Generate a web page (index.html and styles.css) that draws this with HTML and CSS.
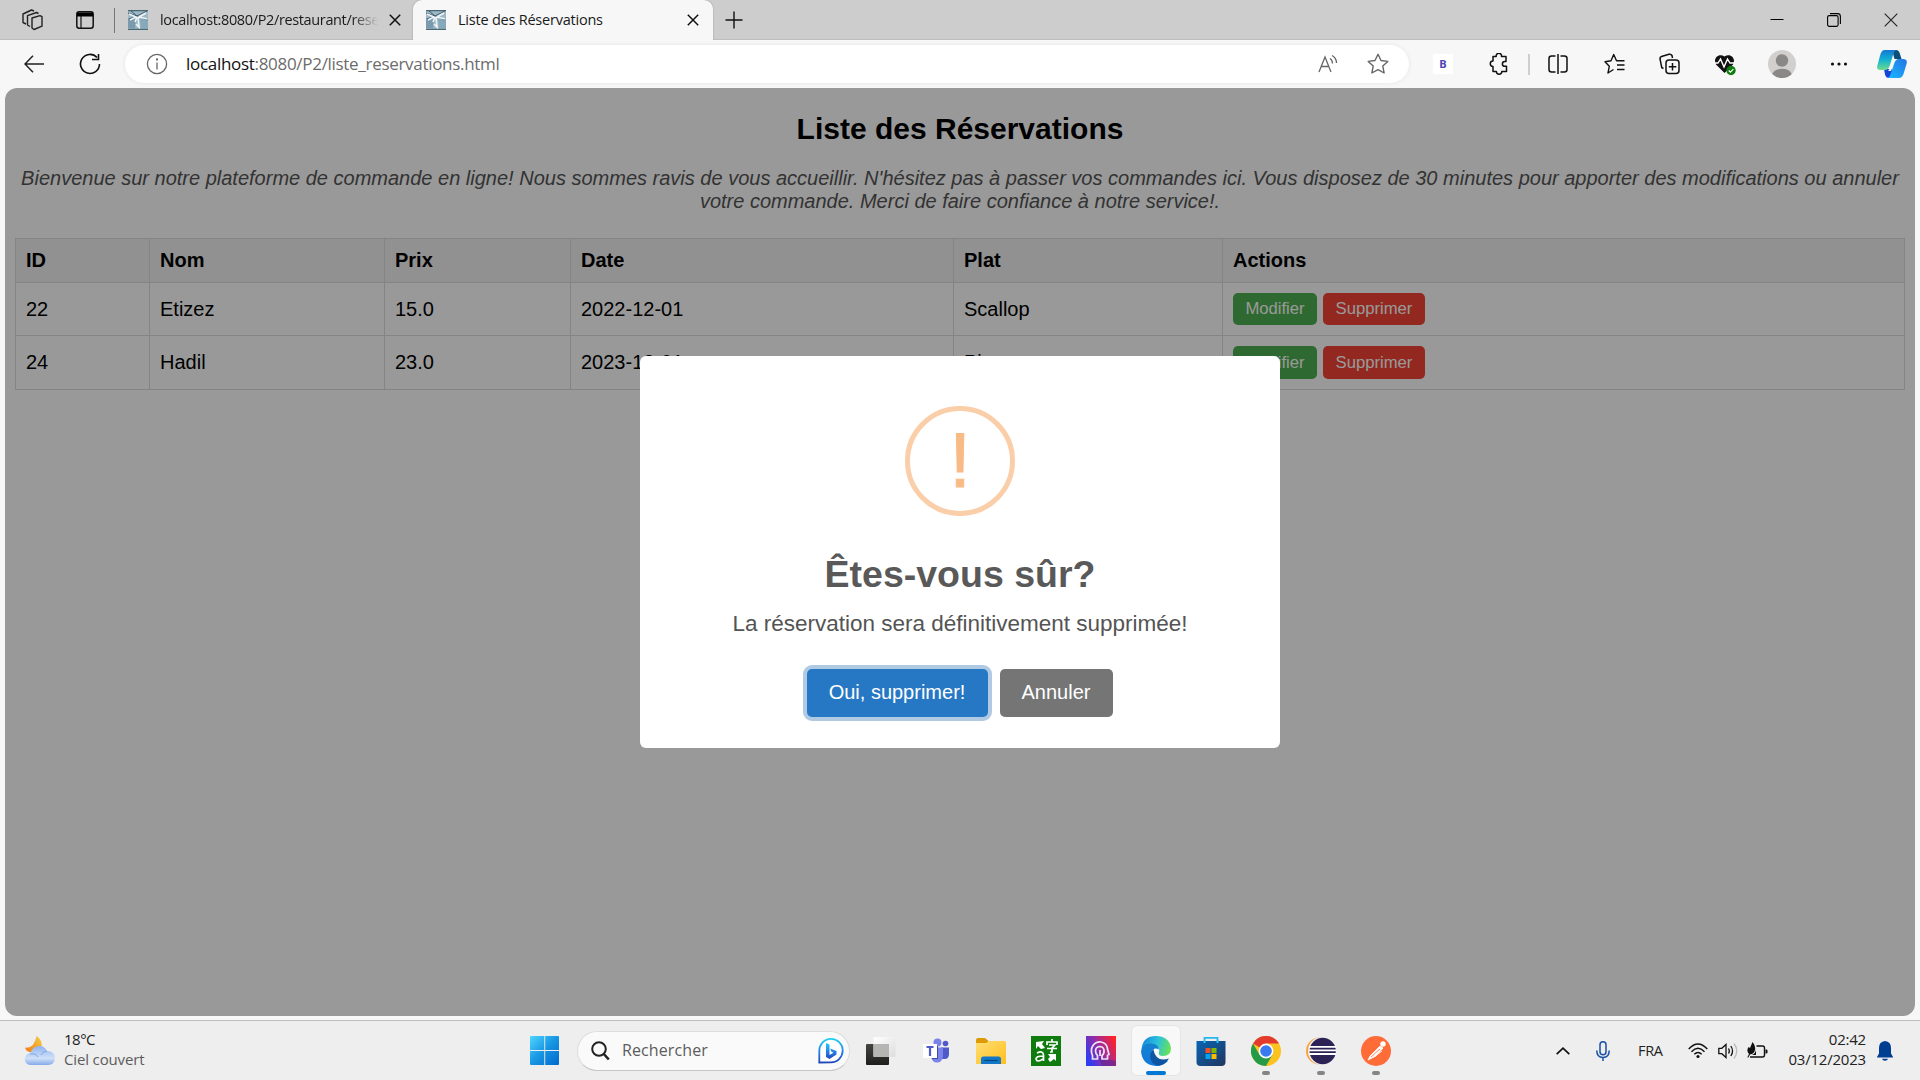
FILE: index.html
```html
<!DOCTYPE html>
<html lang="fr">
<head>
<meta charset="utf-8">
<title>Liste des Réservations</title>
<link rel="stylesheet" href="styles.css">
</head>
<body>
<svg class="defs" width="0" height="0" aria-hidden="true">
  <symbol id="favicon" viewBox="0 0 20 20">
    <rect width="20" height="20" rx="2" fill="#9db8c6"/>
    <path d="M0 8h8L7 18H0z" fill="#7a9bad"/><path d="M12 9h8v9h-7z" fill="#86aabc"/>
    <path d="M0 0h20v1.200H0zM0 18.800h20V20H0z" fill="#4b6775"/>
    <path d="M0 3l9 3 10-5M1 9l8-3 10 4M3 1l6 5" stroke="#3f5b69" stroke-width="1" fill="none"/>
    <path d="M1 4l7 3-6 3M18 3l-7 4 8 2M9 7l-2 5M10 7l1 10-3-3" stroke="#eef4f7" stroke-width="1.600" fill="none"/>
  </symbol>
  <symbol id="cross" viewBox="0 0 12 12"><path d="M.8.8l10.400 10.400M11.200.8L.8 11.200" stroke="#111" stroke-width="1.500" fill="none"/></symbol>
</svg>

<header class="tabbar">
  <svg class="workspaces" width="22" height="22" viewBox="0 0 22 22" fill="none" stroke="#222" stroke-width="1.400" stroke-linejoin="round"><path d="M10 9l8-2.300 2 1v9.500l-8 3.300-2-1.500z"/><path d="M8 17.500L5.500 16V6.700L14.500 3.500l2 1M4 15l-3-1.500V5L9.500 1l2.500 1"/></svg>
  <svg class="tab-actions" width="18" height="18" viewBox="0 0 18 18"><rect x=".8" y=".8" width="16.400" height="16.400" rx="2.500" fill="none" stroke="#111" stroke-width="1.500"/><path d="M1 1.500h16V5.500H1z"/><path d="M5 5v12" stroke="#111" stroke-width="1.200"/></svg>
  <span class="tab-rule"></span>
  <div class="tab">
    <svg width="20" height="20"><use href="#favicon"/></svg>
    <span class="tab-title tab-title-faded">localhost:8080/P2/restaurant/rese</span>
    <svg class="tab-close" width="12" height="12"><use href="#cross"/></svg>
  </div>
  <div class="tab tab-active">
    <svg width="20" height="20"><use href="#favicon"/></svg>
    <span class="tab-title">Liste des Réservations</span>
    <svg class="tab-close" width="12" height="12"><use href="#cross"/></svg>
  </div>
  <svg class="new-tab" width="18" height="18" viewBox="0 0 18 18"><path d="M9 .5v17M.5 9h17" stroke="#111" stroke-width="1.400"/></svg>
  <div class="window-controls">
    <svg width="14" height="14" viewBox="0 0 14 14"><path d="M.5 6.500h13" stroke="#000" stroke-width="1"/></svg>
    <svg width="14" height="14" viewBox="0 0 14 14" fill="none" stroke="#000" stroke-width="1.100"><rect x=".6" y="2.600" width="10.500" height="10.800" rx="1.600"/><path d="M3 .6h7.500q2.900 0 2.900 2.900V11"/></svg>
    <svg width="14" height="14" viewBox="0 0 14 14"><path d="M.7.7l12.600 12.600M13.300.7L.7 13.300" stroke="#222" stroke-width="1.100"/></svg>
  </div>
</header>

<nav class="toolbar">
  <svg class="back" width="20" height="18" viewBox="0 0 20 18" fill="none" stroke="#222" stroke-width="1.500"><path d="M9 .7L1 9l8 8.300M1 9h19"/></svg>
  <svg class="reload" width="22" height="22" viewBox="0 0 22 22" fill="none" stroke="#111" stroke-width="1.600"><path d="M20.500 11A9.500 9.500 0 1 1 18 4.500M19.500 1v5.500H13"/></svg>
  <div class="address">
    <svg width="22" height="22" viewBox="0 0 22 22" fill="none" stroke="#666" stroke-width="1.300"><circle cx="11" cy="11" r="9.600"/><path d="M11 9.500v7"/><circle cx="11" cy="6.500" r=".5" fill="#666"/></svg>
    <span class="url"><span class="url-host">localhost</span>:8080/P2/liste_reservations.html</span>
    <svg class="read-aloud" width="21" height="20" viewBox="0 0 21 20" fill="none" stroke="#666" stroke-width="1.300"><path d="M1 18L7 3l6 15M3.200 12.500h7.600M12 4.500q2.500 1.500 2.500 5M14 1.500q4.500 2.500 4.500 7.500"/></svg>
    <svg width="22" height="22" viewBox="0 0 22 22" fill="none" stroke="#666" stroke-width="1.400" stroke-linejoin="round"><path d="M11 1.300l3 6.200 6.800.9-5 4.700 1.300 6.900-6.100-3.300L4.900 20l1.300-6.900-5-4.700L8 7.500z"/></svg>
  </div>
  <span class="slot"><span class="extension">B</span></span>
  <span class="slot"><svg width="20" height="22" viewBox="0 0 20 22" fill="none" stroke="#111" stroke-width="1.500" stroke-linejoin="round"><path d="M4 3.500h3.200a2.700 2.700 0 1 1 5.300 0h4.500v5h-1.200a2.200 2.200 0 0 0 0 4.800h1.700v5.200h-4.700a2.700 2.700 0 1 1-5.400 0H4v-5a2.700 2.700 0 1 1 0-5.400z"/></svg></span>
  <span class="toolbar-rule"></span>
  <span class="slot"><svg width="20" height="22" viewBox="0 0 20 22" fill="none" stroke="#111" stroke-width="1.500"><path d="M7.500 3H3.500Q1 3 1 5.500v11Q1 19 3.500 19h4M12.500 3h4Q19 3 19 5.500v11q0 2.500-2.500 2.500h-4M10 1v20"/></svg></span>
  <span class="slot"><svg width="21" height="22" viewBox="0 0 21 22" fill="none" stroke="#111" stroke-width="1.400" stroke-linejoin="round"><path d="M9.500 16.500L4 20l1.300-6.700L1 8.700l6-1L9.700 1.500l2.800 6.200h8M13 12h7.500M13 16.500h7.500"/></svg></span>
  <span class="slot slot-narrow"><svg width="21" height="22" viewBox="0 0 21 22" fill="none" stroke="#111" stroke-width="1.500"><path d="M4.500 15.500L2.800 14.700 1 6Q.8 4 2.500 3.500L10 1.300q2-.5 3 1.200L13.500 5"/><rect x="7" y="7" width="13" height="13.500" rx="3"/><path d="M13.500 10v7.500M9.800 13.700h7.500"/></svg></span>
  <span class="slot slot-narrow"><svg width="22" height="24" viewBox="0 0 22 24"><path d="M10.500 21L2 12.500C-1.500 6 5 .5 10.500 4.500 16 .5 22.500 6 19 12.500z" fill="#111"/><path d="M0 11h4l2.500-4 3.500 8 3.500-8 2.500 4h5" fill="none" stroke="#fff" stroke-width="1.400"/><circle cx="17" cy="18.500" r="4.700" fill="#107c10"/><path d="M14.800 18.500l1.600 1.600 3-3" fill="none" stroke="#fff" stroke-width="1.100"/></svg></span>
  <span class="slot slot-wide"><svg width="28" height="28" viewBox="0 0 28 28"><circle cx="14" cy="14" r="14" fill="#d2d0ce"/><circle cx="14" cy="10.500" r="6.200" fill="#8a8886"/><path d="M4.200 24a10.500 8 0 0 1 19.600 0A14 14 0 0 1 4.200 24z" fill="#8a8886"/></svg></span>
  <span class="slot"><svg width="18" height="6" viewBox="0 0 18 6" fill="#111"><circle cx="2.500" cy="3" r="1.600"/><circle cx="9" cy="3" r="1.600"/><circle cx="15.500" cy="3" r="1.600"/></svg></span>
  <span class="slot slot-copilot"><svg width="30" height="28" viewBox="0 0 30 28">
    <defs><linearGradient id="cp1" x1="0" y1="0" x2="0" y2="1"><stop offset="0" stop-color="#1577d3"/><stop offset=".5" stop-color="#12b3d0"/><stop offset="1" stop-color="#6fdc8c"/></linearGradient><linearGradient id="cp2" x1="0" y1="1" x2="1" y2="0"><stop offset="0" stop-color="#18b9ff"/><stop offset="1" stop-color="#2474e4"/></linearGradient></defs>
    <path d="M15 0h4q3 0 4 4l1.500 5h-7z" fill="#0b4f7d"/><path d="M15 28h-3q-3 0-4-3.500L7 19h8z" fill="#1744d8"/>
    <path d="M7.500 0H19q-2 1-3 5l-3 10q-1.500 5-5 5H3q-4 0-2.500-5L3.500 4Q5 0 7.500 0z" fill="url(#cp1)"/>
    <path d="M22 28H11q2-1 3-5l3-9q1.500-5 5-5h4q5 0 3.500 5l-3 10q-1.500 4-4.500 4z" fill="url(#cp2)"/><path d="M16 9h3q-2 2-3 6l-2 6h-3q1.500-1 2.500-5z" fill="#f7f7f7"/></svg></span>
</nav>

<div class="viewport">
  <main class="page">
    <h2 class="page-title">Liste des Réservations</h2>
    <p class="intro">Bienvenue sur notre plateforme de commande en ligne! Nous sommes ravis de vous accueillir. N'hésitez pas à passer vos commandes ici. Vous disposez de 30 minutes pour apporter des modifications ou annuler votre commande. Merci de faire confiance à notre service!.</p>
    <table class="bookings">
      <colgroup><col class="col-id"><col class="col-name"><col class="col-price"><col class="col-date"><col class="col-dish"><col></colgroup>
      <thead><tr><th>ID</th><th>Nom</th><th>Prix</th><th>Date</th><th>Plat</th><th>Actions</th></tr></thead>
      <tbody>
        <tr><td>22</td><td>Etizez</td><td>15.0</td><td>2022-12-01</td><td>Scallop</td><td><div class="actions"><button class="btn btn-edit">Modifier</button><button class="btn btn-delete">Supprimer</button></div></td></tr>
        <tr class="row-last"><td>24</td><td>Hadil</td><td>23.0</td><td>2023-12-01</td><td>Pizza</td><td><div class="actions"><button class="btn btn-edit">Modifier</button><button class="btn btn-delete">Supprimer</button></div></td></tr>
      </tbody>
    </table>
  </main>
  <div class="overlay">
    <section class="modal" role="dialog">
      <div class="modal-icon">!</div>
      <h2 class="modal-title">Êtes-vous sûr?</h2>
      <div class="modal-text">La réservation sera définitivement supprimée!</div>
      <div class="modal-actions"><button class="modal-btn confirm">Oui, supprimer!</button><button class="modal-btn cancel">Annuler</button></div>
    </section>
  </div>
</div>

<footer class="taskbar">
  <div class="weather">
    <svg width="32" height="30" viewBox="0 0 32 30">
      <defs><linearGradient id="moon" x1="1" y1="0" x2="0" y2="1"><stop offset="0" stop-color="#f6cf45"/><stop offset="1" stop-color="#ef7a18"/></linearGradient><linearGradient id="cloud" x1="0" y1="0" x2="0" y2="1"><stop offset="0" stop-color="#8fb4f0"/><stop offset=".65" stop-color="#cfe0f8"/><stop offset="1" stop-color="#86a9ea"/></linearGradient></defs>
      <path d="M12.500 0Q19 4 17.500 12L8 16.500Q2 16 1 11.500 10 13 12.500 0z" fill="url(#moon)"/>
      <path d="M7 29a6 6 0 0 1-.5-12Q9 10 15.500 10q5 0 7.500 5 8 0 8 7.500-.5 6-7 6.500z" fill="url(#cloud)"/><path d="M6 18q6-1 8 3M23 15q-4 0-6 4" fill="none" stroke="#7fa3e3" stroke-width="1"/></svg>
    <div class="weather-text"><span class="weather-temp">18°C</span><span class="weather-sky">Ciel couvert</span></div>
  </div>
  <svg class="start" width="30" height="30" viewBox="0 0 30 30"><defs><linearGradient id="win" x1="0" y1="0" x2="1" y2="1"><stop offset="0" stop-color="#4fd5ff"/><stop offset=".5" stop-color="#1795e3"/><stop offset="1" stop-color="#0069cc"/></linearGradient></defs><path d="M1 0h13.300v14H0V1q0-1 1-1zM15.200 0H28q1 0 1 1v13H15.200zM0 15h14.300v14H1q-1 0-1-1zM15.200 15H29v13q0 1-1 1H15.200z" fill="url(#win)"/></svg>
  <div class="search">
    <svg width="19" height="20" viewBox="0 0 19 20" fill="none" stroke="#222" stroke-width="2"><circle cx="8" cy="8" r="6.800"/><path d="M12.800 13l5 5.500" stroke-width="2.600"/></svg>
    <span class="search-label">Rechercher</span>
    <svg width="26" height="26" viewBox="0 0 26 26"><defs><linearGradient id="bing" x1="0" y1="0" x2="0" y2="1"><stop offset="0" stop-color="#20d0f2"/><stop offset=".6" stop-color="#2577e8"/><stop offset="1" stop-color="#2048b8"/></linearGradient></defs><path d="M1.300 24.500V13A11.700 11.700 0 1 1 13 24.300z" fill="#fff" stroke="url(#bing)" stroke-width="1.800"/><path d="M8 5l3.500 1.500v10.500l4-2.300-2.300-1.200-1-3 6.300 2.500v3.500L11.500 21 8 19z" fill="url(#bing)"/></svg>
  </div>
  <div class="apps">
    <span class="app"><svg width="30" height="30" viewBox="0 0 30 30"><defs><linearGradient id="tv" x1="0" y1="0" x2="0" y2="1"><stop offset="0" stop-color="#444442"/><stop offset="1" stop-color="#1e1e1c"/></linearGradient><linearGradient id="tv2" x1="0" y1="0" x2="1" y2="1"><stop offset="0" stop-color="#fff"/><stop offset="1" stop-color="#ddd"/></linearGradient></defs><rect y="8" width="23" height="21" rx="1" fill="url(#tv)"/><rect x="7.500" y="1" width="22" height="20" rx="1" fill="url(#tv2)"/><path d="M7.500 8H23v13H7.500z" fill="#b5b5b4"/></svg></span>
    <span class="app"><svg width="28" height="26" viewBox="0 0 28 26"><circle cx="15.500" cy="4.500" r="4" fill="#7b83eb"/><circle cx="23.500" cy="5.500" r="2.800" fill="#5059c9"/><path d="M19 9.500h8v7q-.5 5-5 4.500h-3z" fill="#5059c9"/><path d="M10 9.500h11v9q-1 6-6 6t-6-6z" fill="#7b83eb"/><path d="M10 8h6v13h-6z" fill="#444a9e"/><rect x="1" y="6" width="14" height="14" fill="#fff"/><path d="M4.500 9h7M8 9v9" stroke="#5059c9" stroke-width="2.200"/></svg></span>
    <span class="app"><svg width="30" height="28" viewBox="0 0 30 28"><defs><linearGradient id="fold" x1="0" y1="0" x2="1" y2="1"><stop offset="0" stop-color="#ffdf75"/><stop offset="1" stop-color="#ffbe1c"/></linearGradient></defs><path d="M0 8V3q0-2 2-2h7l3.500 3v4z" fill="#dc9a05"/><path d="M0 6h10l3-2h15q2 0 2 2v21H0z" fill="url(#fold)"/><path d="M5 27v-5q0-2.500 2.500-2.500h15q2.500 0 2.500 2.500v5z" fill="#1177c9"/><path d="M8.500 23.500h13" stroke="#07477f" stroke-width="1.200"/></svg></span>
    <span class="app"><svg width="30" height="30" viewBox="0 0 30 30"><rect width="30" height="30" fill="#107c10"/><path d="M5 6l8-1-2 3 3 4-4 1-3-3-2 3zM17 18h8v7l-2-2-4 3-2-3 2-2z" fill="#fff"/><path d="M6 17q6-3 6.500 2v6M12 20q-7 0-7 3 1 4 7 0M21 3v3M16 9V6h10v3M18 9h6l-3 3v4h-2M16 12.500h10" fill="none" stroke="#fff" stroke-width="1.700"/></svg></span>
    <span class="app"><svg width="30" height="30" viewBox="0 0 30 30"><defs><linearGradient id="pr" x1="0" y1=".7" x2="1" y2=".2"><stop offset="0" stop-color="#2c3cf5"/><stop offset=".5" stop-color="#9b2ba0"/><stop offset="1" stop-color="#ff2228"/></linearGradient></defs><rect width="30" height="30" fill="url(#pr)"/><path d="M13 22l9 1 8 2v5H16z" fill="#5b288e" opacity=".6"/><path d="M11.500 23H6.500v-3.500Q4 14 7 9.500q3-4 8-3.500 6 1 6.500 7l1.500 5.500-1.500.5v4H16v-3.500q2.500-2 2-5.500-.8-3.500-4.500-3.500-4 .5-4 4.500 0 2.500 2 4.500zM14 20v-6" fill="none" stroke="#eee4f5" stroke-width="1.700"/></svg></span>
    <span class="app app-active"><svg width="30" height="30" viewBox="0 0 30 30"><defs><linearGradient id="e1" x1="0" y1=".4" x2="1" y2=".6"><stop offset="0" stop-color="#1688d9"/><stop offset=".5" stop-color="#2bc1dc"/><stop offset="1" stop-color="#6ce450"/></linearGradient><linearGradient id="e2" x1="0" y1="0" x2="0" y2="1"><stop offset="0" stop-color="#1482cf"/><stop offset="1" stop-color="#1479dc"/></linearGradient></defs><path d="M.5 13Q2 0 15 0t15 12q0 8-8 8-5 0-4-3 2-6-6-8Q5 8 .5 13z" fill="url(#e1)"/><path d="M0 15Q2 7 10 7.500q7 0 8 6-6-3-6 3 1 7 9 8l6 .5Q22 30 15 30 1 29 0 15z" fill="url(#e2)"/><path d="M12.500 14Q8 17 9.500 23q2 6 8 6.800Q24 29 28 22.500q-13 4-15.500-8.500z" fill="#1055a2"/></svg><i class="indicator indicator-wide"></i></span>
    <span class="app"><svg width="30" height="30" viewBox="0 0 30 30"><defs><linearGradient id="st" x1="0" y1="0" x2="1" y2="1"><stop offset="0" stop-color="#0865b5"/><stop offset="1" stop-color="#20365f"/></linearGradient></defs><path d="M8.500 7V1.800h13V7" fill="none" stroke="#25b7ee" stroke-width="1.800"/><path d="M.5 5h29v21q0 4-4 4h-21q-4 0-4-4z" fill="url(#st)"/><path d="M8.500 7V4.500M21.500 7V4.500" stroke="#35c9fa" stroke-width="1.800"/><path d="M9.500 12h5v5h-5z" fill="#f25022"/><path d="M15.500 12h5v5h-5z" fill="#7fba00"/><path d="M9.500 18h5v5h-5z" fill="#00a4ef"/><path d="M15.500 18h5v5h-5z" fill="#ffb900"/></svg></span>
    <span class="app"><svg width="30" height="30" viewBox="0 0 30 30"><circle cx="15" cy="15" r="15" fill="#fcc31e"/><path d="M15 15L2 7.500A15 15 0 0 1 28 7.500H15z" fill="#e33b2e"/><path d="M2 7.500A15 15 0 0 0 15 30l6.500-11.300L15 15l-6.500 3.700z" fill="#259b48"/><circle cx="15" cy="15" r="7.400" fill="#fff"/><circle cx="15" cy="15" r="5.800" fill="#397bee"/></svg><i class="indicator"></i></span>
    <span class="app"><svg width="30" height="30" viewBox="0 0 30 30"><circle cx="13.500" cy="15" r="13.500" fill="#f9a23c"/><circle cx="16" cy="15" r="14" fill="#eee"/><circle cx="16.700" cy="15" r="13.200" fill="#2c2255"/><path d="M3 10.800h27M3 14.400h27M3 18h27" stroke="#fff" stroke-width="1.800"/></svg><i class="indicator"></i></span>
    <span class="app"><svg width="30" height="30" viewBox="0 0 30 30"><circle cx="15" cy="15" r="15" fill="#ff6c37"/><circle cx="22" cy="8" r="2.700" fill="#fff"/><path d="M19 10l3 2-7 8-8 4 2-4zM17 18l4-3" fill="#fff" stroke="#fff" stroke-width=".8"/><path d="M10 21l9-8" stroke="#ff6c37" stroke-width=".8"/></svg><i class="indicator"></i></span>
  </div>
  <div class="tray">
    <svg class="chevron" width="14" height="8" viewBox="0 0 14 8" fill="none" stroke="#111" stroke-width="1.700"><path d="M.7 7.200L7 1.200l6.300 6"/></svg>
    <svg class="mic" width="14" height="20" viewBox="0 0 14 20" fill="none" stroke="#1a50a5" stroke-width="1.500"><rect x="4" y=".8" width="6" height="13" rx="3"/><path d="M.8 9.500q0 7 6.200 7t6.200-7M7 16.500V20"/></svg>
    <span class="lang">FRA</span>
    <svg class="wifi" width="20" height="16" viewBox="0 0 20 16" fill="none" stroke="#111" stroke-width="1.400"><path d="M.7 6Q10-4 19.300 6M3.500 8.700Q10 1.800 16.500 8.700M6.300 11.300q3.700-3.700 7.400 0"/><circle cx="10" cy="13.500" r="1.600" fill="#111" stroke="none"/></svg>
    <svg class="sound" width="20" height="18" viewBox="0 0 20 18" fill="none" stroke="#111" stroke-width="1.300"><path d="M.8 6.300h3L8 2.500v13l-4.200-3.800h-3z"/><path d="M10.500 6.500q1.700 2.500 0 5M12.800 4q3.500 5 0 10"/><path d="M16 1.500q5.500 7.500 0 15" stroke="#bbb"/></svg>
    <svg class="battery" width="21" height="17" viewBox="0 0 21 17"><path d="M9.500 4h6q2 0 2 2v7q0 2-2 2H3" fill="none" stroke="#111" stroke-width="1.400"/><path d="M18.500 7.500h1q1 0 1 1v2q0 1-1 1h-1zM5.500 0Q9 4 8 8q-1 4-5 4.500L1 16l-.5-1 1.500-3Q-1 9 1.500 5L3 6zM9 8v5H5q3-1 4-5z" fill="#111"/></svg>
    <div class="clock"><span>02:42</span><span>03/12/2023</span></div>
    <svg class="bell" width="16" height="20" viewBox="0 0 16 20" fill="#003e92"><path d="M8 0Q2 .5 2 7v5.500L0 16v.5h16V16l-2-3.500V7Q14 .5 8 0zM5 17.800h6q-.5 2-3 2t-3-2z"/></svg>
  </div>
</footer>
</body>
</html>
```
FILE: styles.css
```css
* { box-sizing: border-box; }
body {
  margin: 0;
  width: 1920px;
  height: 1080px;
  overflow: hidden;
  display: flex;
  flex-direction: column;
  background: #f7f7f7;
  font-family: "Liberation Sans", Arial, sans-serif;
}
svg { display: block; flex: none; }
.defs { display: none; }

/* Tab strip */
.tabbar {
  height: 40px;
  flex: none;
  display: flex;
  align-items: center;
  background: #cdcdcd;
  box-shadow: inset 0 -1px 0 #bdbdbd;
  font-family: "Open Sans", "Noto Sans", sans-serif;
}
.workspaces { margin-left: 22px; }
.tab-actions { margin-left: 32px; }
.tab-rule { width: 1px; height: 25px; margin-left: 20px; background: #777; }
.tab {
  height: 40px;
  width: 298px;
  display: flex;
  align-items: center;
  padding: 0 13px;
}
.tab-active {
  width: 300px;
  padding-right: 14px;
  background: #f7f7f7;
  border-radius: 9px 9px 0 0;
  box-shadow: 0 0 2px #999;
  clip-path: inset(0 -3px 0 -3px);
}
.tab-title { margin-left: 12px; padding-bottom: 2px; flex: 1; font-size: 14.5px; letter-spacing: -0.22px; color: #1a1a1a; white-space: nowrap; }
.tab-title-faded { flex: none; width: 218px; letter-spacing: -0.36px; overflow: hidden; -webkit-mask-image: linear-gradient(90deg, #000 88%, transparent); mask-image: linear-gradient(90deg, #000 88%, transparent); }
.tab-title-faded + .tab-close { margin-left: 11px; }
.new-tab { margin-left: 12px; }
.window-controls { margin-left: auto; margin-right: 22px; display: flex; gap: 43px; }

/* Toolbar */
.toolbar { height: 48px; flex: none; display: flex; align-items: center; background: #f7f7f7; }
.back { margin-left: 24px; }
.reload { margin-left: 35px; }
.address {
  width: 1284px;
  height: 38px;
  margin-left: 24px;
  margin-right: 6px;
  padding: 0 20px 0 21px;
  display: flex;
  align-items: center;
  border-radius: 19px;
  background: #fff;
  box-shadow: 0 0 4px #e4e4e4;
}
.url { margin-left: 18px; padding-bottom: 2px; flex: 1; font: 17px "Open Sans", "Noto Sans", sans-serif; letter-spacing: -0.3px; color: #6c6c6c; }
.url-host { color: #111; }
.read-aloud { margin-right: 28px; }
.slot { width: 56px; flex: none; display: flex; justify-content: center; }
.slot-narrow { width: 55px; }
.slot-wide { width: 59px; }
.slot-copilot { width: 50px; }
.extension { width: 20px; height: 20px; background: #fff; color: #4b45b5; font: bold 11px/20px "Open Sans", sans-serif; text-align: center; }
.toolbar-rule { width: 2px; height: 21px; margin-left: 1px; background: #cfcfcf; }

/* Web page */
.viewport {
  position: relative;
  width: 1910px;
  height: 928px;
  flex: none;
  margin-left: 5px;
  border-radius: 12px;
  overflow: hidden;
  background: #fff;
}
.page { padding: 24px 10px 0; }
.page-title { margin: 0; font-size: 30px; line-height: 34px; text-align: center; color: #000; }
.intro { margin: 21px 0 0; font-size: 20px; font-style: italic; line-height: 23px; text-align: center; color: #555; }
.bookings { width: 1890px; margin-top: 25px; border-collapse: collapse; table-layout: fixed; font-size: 20px; line-height: 23px; color: #000; }
.bookings th, .bookings td { border: 1px solid #ddd; padding: 0 10px; text-align: left; }
.bookings th { height: 44px; background: #f2f2f2; }
.bookings td { height: 53px; }
.bookings .row-last td { height: 54px; }
.col-id { width: 134px; }
.col-name { width: 235px; }
.col-price { width: 186px; }
.col-date { width: 383px; }
.col-dish { width: 269px; }
.actions { display: flex; gap: 6px; }
.btn { height: 32px; padding: 0 12px 1px; border: 0; border-radius: 5px; color: #fff; font: 16.67px "Liberation Sans", Arial, sans-serif; }
.row-last .btn { height: 33px; padding-bottom: 0; }
.btn-edit { width: 84px; background: #4caf50; }
.btn-delete { width: 102px; background: #f44336; }

/* Confirmation dialog */
.overlay { position: absolute; inset: 0; display: flex; align-items: center; justify-content: center; background: rgba(0, 0, 0, .4); }
.modal { width: 640px; height: 392px; padding-top: 50px; display: flex; flex-direction: column; align-items: center; border-radius: 6px; background: #fff; color: #545454; }
.modal-icon { width: 110px; height: 110px; border: 5px solid #facea8; border-radius: 50%; color: #f8bb86; font-size: 78px; line-height: 98px; text-align: center; -webkit-text-stroke: 1px #f8bb86; }
.modal-title { margin: 36px 0 0; font-size: 37.5px; line-height: 44px; color: #595959; }
.modal-text { margin-top: 15px; font-size: 22.5px; line-height: 26px; }
.modal-actions { display: flex; gap: 12px; margin: 32px 1px 0 0; }
.modal-btn { height: 48px; border: 0; border-radius: 5px; color: #fff; font: 20px "Liberation Sans", Arial, sans-serif; padding: 0 0 2px; }
.confirm { width: 181px; background: #2778c4; box-shadow: 0 0 0 4px #b1cae4; }
.cancel { width: 113px; background: #757575; }

/* Taskbar */
.taskbar {
  height: 60px;
  flex: none;
  margin-top: 4px;
  display: flex;
  align-items: center;
  background: #eee;
  border-top: 1px solid #bdbdbd;
  font: 15px "Open Sans", "Noto Sans", sans-serif;
  color: #222;
}
.weather { width: 530px; flex: none; padding-left: 24px; display: flex; align-items: center; gap: 8px; }
.weather-text, .clock { display: flex; flex-direction: column; padding-bottom: 4px; line-height: 20px; white-space: nowrap; }
.weather-text { letter-spacing: -0.15px; }
.weather-temp { letter-spacing: -0.5px; }
.weather-sky { color: #5c5c5c; }
.search { width: 273px; height: 40px; margin-left: 17px; padding: 0 5px 0 13px; display: flex; align-items: center; border: 1px solid #ddd; border-bottom-color: #c6c6c6; border-radius: 20px; background: #fafafa; }
.search-label { flex: 1; margin-left: 12px; padding-bottom: 1px; font-size: 16px; letter-spacing: .1px; color: #5c5c5c; }
.apps { display: flex; margin-left: 3px; }
.app { position: relative; width: 48px; height: 49px; margin: 0 3.500px; display: flex; align-items: center; justify-content: center; }
.app-active { background: #f8f8f8; border-radius: 5px; box-shadow: 0 0 0 1px #e5e5e5; }
.indicator { position: absolute; bottom: 0; left: 20px; width: 8px; height: 4px; border-radius: 2px; background: #858585; }
.indicator-wide { left: 14px; width: 20px; background: #0078d4; }
.tray { margin-left: auto; margin-right: 27px; display: flex; align-items: center; }
.mic { margin-left: 26px; }
.lang { width: 25px; margin-left: 28px; padding-bottom: 1px; font-size: 14.5px; letter-spacing: -0.3px; }
.wifi { margin-left: 25px; }
.sound { margin-left: 10px; }
.battery { margin-left: 9px; }
.clock { width: 80px; margin-left: 18px; align-items: flex-end; letter-spacing: -0.2px; }
.bell { margin-left: 11px; }
```
